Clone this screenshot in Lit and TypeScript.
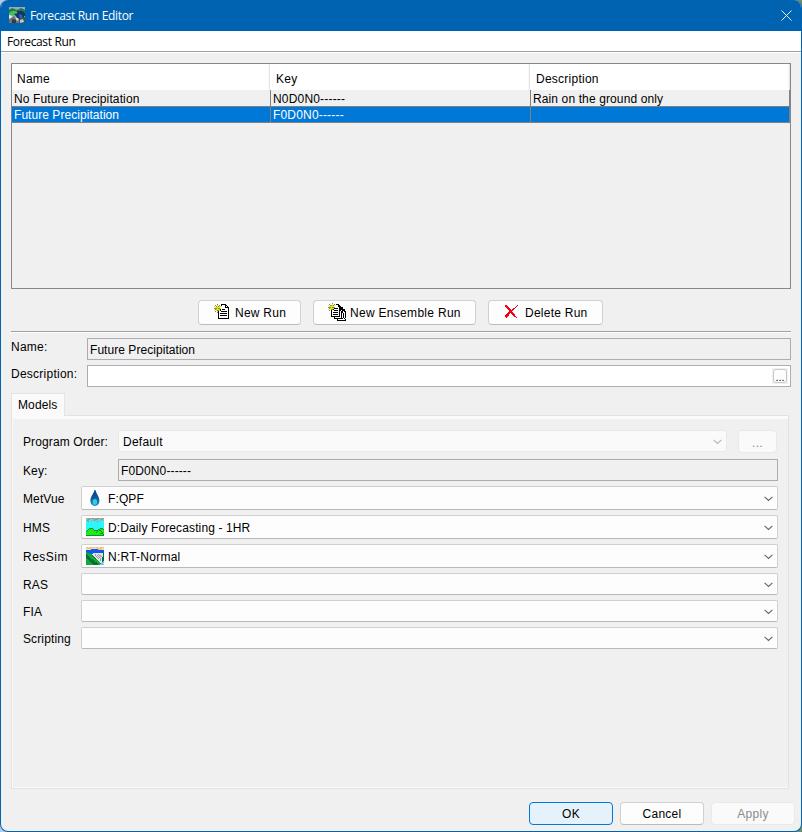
import { LitElement, html, svg, css, nothing } from "lit";
import { customElement, property } from "lit/decorators.js";

type Palette = Record<string, string>;

/* Draws a small bitmap-style icon: one character per pixel, runs merged into rects. */
function pixels(rows: string[], palette: Palette) {
  const w = Math.max(...rows.map((r) => r.length));
  const rects: unknown[] = [];
  rows.forEach((row, y) => {
    let x = 0;
    while (x < row.length) {
      const c = row[x];
      let n = 1;
      while (row[x + n] === c) n++;
      if (palette[c]) rects.push(svg`<rect x=${x} y=${y} width=${n} height="1" fill=${palette[c]}></rect>`);
      x += n;
    }
  });
  return html`<svg width=${w} height=${rows.length} viewBox="0 0 ${w} ${rows.length}" shape-rendering="crispEdges">${rects}</svg>`;
}

const DOC: Palette = { k: "#000", w: "#fff", y: "#e6e600", g: "#84847c" };

const newRun = [
  "   g   kkkkk   ",
  " g y g kwwwkk  ",
  "y gygyywwwwkwk ",
  " yyyyy wwwwkkkk",
  "gggyggywwwwwwwk",
  " gyyyykwkkkwwwk",
  "y yggykwwwwwwwk",
  " g ykwwkkkkkkwk",
  "   gkwwwwwwwwwk",
  "    kwkkkkkkkwk",
  "    kwwwwwwwwwk",
  "    kwkkkkkkkwk",
  "    kwwwwwwwwwk",
  "    kwwwwwwwwwk",
  "    kkkkkkkkkkk",
];

const newEnsemble = [
  "    g             ",
  " g  y g kkk       ",
  "y ggygywwwkk      ",
  " yyyyy wwwkkk     ",
  "gggygggwwwwkkkk   ",
  " gyyyykkkkwkkkk   ",
  "y yggkwwwwwkkkkkk ",
  " g kwwkkkkwkkwkkk ",
  "   kwwwwwwwkwkkwkk",
  "   kwkkkkkwkwkkwwk",
  "   kwwwwwwwkwkwkwk",
  "   kwkkkkkwkwkwkwk",
  "   kwwwwwwwkwkwkwk",
  "   kkkkkkkkkwkwkwk",
  "      kwwwwwwkwkwk",
  "      kkkkkkkkkwkw",
  "         kwwwwwwwk",
  "         kkkkkkkkk",
];

const remove = [
  "rr          r",
  "rrr        r ",
  " rrr      r  ",
  "  rrr   rr   ",
  "   rrr rr    ",
  "    rrrr     ",
  "    rrr      ",
  "   rrrrr     ",
  "  rrr rrr    ",
  " rrr   rrr   ",
  "rrrr    rr   ",
  "rrr      rr  ",
  " r         r ",
];

const hms = [
  "aaabaabbaaabbaaaba",
  "aabaaacaabbaaacbaa",
  "cbaccaacbacccaaaca",
  "ccbcccaccccbccaccc",
  "cccccccccccccccccc",
  "cccccccccccccccccc",
  "cccccccccccccccccc",
  "cccccccccccccccccc",
  "cccccccccccccccccc",
  "cccccccccccccccccc",
  "cccddddcccccccdddc",
  "ccdggggdccccddgggd",
  "cdggggggddddgddggg",
  "dggggggggggdgggdgg",
  "ggggggggggdgggggdg",
  "ggggggggggggggdddg",
  "gggggggggggggggggd",
  "dddddddddddddddddd",
];

const resSim = [
  "oopooooopoooppoooo",
  "pooooppppppooooopp",
  "wwwppbbbbbbboooowp",
  "bbbbbbbbbbbbbbbbbb",
  "bbbbbbbbbbbbbbbbbb",
  "gbbbbbbbbbbbbbbbbb",
  "ggggbbbwwwwwwwwwwd",
  "dgggggwwwswwswwwwd",
  "ddggggdwwswswsswwd",
  "dddggggdwwswswsswd",
  "ddddggggdwwswswwdd",
  "gddddggggdwwswswdd",
  "ggdddddggggwwwswdd",
  "gggdddddggggwwswdd",
  "ggggdddddggggwwwdc",
  "gggggddddddgggwwcc",
  "ggggggddddddgggccw",
  "gggggggdddddggcccc",
];

const icons = {
  newRun: () => pixels(newRun, DOC),
  newEnsemble: () => pixels(newEnsemble, DOC),
  remove: () => pixels(remove, { r: "#f00014" }),
  hms: () => pixels(hms, { a: "#a8b0b2", b: "#848c8e", c: "#2cf6fa", d: "#0a941c", g: "#1cec1c" }),
  resSim: () =>
    pixels(resSim, { o: "#f8c078", p: "#fbd8a4", b: "#0a5cf0", w: "#e4e2e8", s: "#a09ca4", g: "#14a83c", d: "#087030", c: "#58c8f4" }),
  drop: () => html`<svg width="10" height="16" viewBox="0 0 10 16">
    <defs>
      <linearGradient id="drop" x1="0" y1="0" x2="0" y2="1">
        <stop offset="0" stop-color="#123c84"></stop>
        <stop offset=".5" stop-color="#0c5a9c"></stop>
        <stop offset="1" stop-color="#1590c4"></stop>
      </linearGradient>
    </defs>
    <path d="M4.500 0C3.500 4 .4 6.500 .4 10.800 .4 14 2.200 16 4.900 16s4.500-2 4.500-5.200C9.400 6.500 6.300 4 5.500 0z" fill="url(#drop)"></path>
    <ellipse cx="4.900" cy="12" rx="2.300" ry="2.900" fill="#3cc8e4"></ellipse>
  </svg>`,
  app: () => html`<svg width="16" height="16" viewBox="0 0 16 16">
    <rect width="16" height="16" fill="#a4b4c0"></rect>
    <path d="M0 0h16v3H0z" fill="#98a8b8"></path>
    <path d="M0 3l3-2 5 2 4-2 4 2v4H0z" fill="#1e7a4c"></path>
    <path d="M0 6l3-2 4 0 2 2-5 3H0z" fill="#48c058"></path>
    <path d="M8 4l5 0 3 2v3l-7 0z" fill="#123a5e"></path>
    <path d="M5 7l5-1 5 3 1 3-6 1z" fill="#1c3464"></path>
    <path d="M10 7l3 1 1 4-3 1z" fill="#2860d0"></path>
    <path d="M0 9l4 0 5 2 1 5H0z" fill="#6c7478"></path>
    <path d="M0 8l4 1-2 2-2 1zM6 10l4 2-2 2z" fill="#e4e8ea"></path>
    <path d="M3 12l4 1 0 3H3z" fill="#303c38"></path>
    <path d="M10 12l6-2v6h-6z" fill="#3c5440"></path>
    <path d="M11 13l3-1 1 3-4 1z" fill="#c4ccca"></path>
  </svg>`,
  chevron: () => html`<svg width="9" height="6" viewBox="0 0 9 6">
    <path d="M.6 .8L4.500 4.500 8.400 .8" fill="none" stroke="currentColor" stroke-width="1.100"></path>
  </svg>`,
};

@customElement("run-combo")
class RunCombo extends LitElement {
  @property() value = "";
  @property() icon = "";
  @property({ type: Boolean, reflect: true }) disabled = false;

  static styles = css`
    :host {
      display: flex;
      align-items: flex-start;
      box-sizing: border-box;
      background: #fdfdfd;
      border: 1px solid #d0d0d0;
      border-bottom-color: #b9b9b9;
      border-radius: 2px;
      color: #000;
    }
    :host([disabled]) {
      background: #fafafa;
      border-color: #e9e9e9;
    }
    svg { display: block; }
    .icon { width: 18px; height: 18px; margin: 2px 4px 0; display: flex; justify-content: center; align-items: center; }
    .value { flex: 1; padding-top: 5px; line-height: 14px; white-space: pre; }
    :host([disabled]) .value { padding: 4px 0 0 4px; }
    .arrow { align-self: center; padding: 1px 4px 0 0; color: #666; }
    :host([disabled]) .arrow { color: #b4b4b4; }
  `;

  render() {
    const draw = icons[this.icon as keyof typeof icons];
    return html`${draw ? html`<span class="icon">${draw()}</span>` : nothing}
      <span class="value">${this.value}</span>
      <span class="arrow">${icons.chevron()}</span>`;
  }
}

const RUNS = [
  { name: "No Future Precipitation", key: "N0D0N0------", description: "Rain on the ground only" },
  { name: "Future Precipitation", key: "F0D0N0------", description: "", selected: true },
];

const MODELS = [
  { label: "MetVue", value: "F:QPF", icon: "drop" },
  { label: "HMS", value: "D:Daily Forecasting - 1HR", icon: "hms" },
  { label: "ResSim", value: "N:RT-Normal", icon: "resSim", wide: true },
  { label: "RAS", value: "", icon: "" },
  { label: "FIA", value: "", icon: "" },
  { label: "Scripting", value: "", icon: "" },
];

@customElement("app-root")
class AppRoot extends LitElement {
  static styles = css`
    :host {
      display: block;
      width: 802px;
      height: 832px;
      background: linear-gradient(90deg, #b4cce4, #6c8c6c);
      font: 12px/14px "Liberation Sans", Arial, sans-serif;
      letter-spacing: 0.12px;
      color: #000;
    }
    * { box-sizing: border-box; }
    svg { display: block; }
    .window {
      display: flex;
      flex-direction: column;
      height: 832px;
      background: #f0f0f0;
      border: solid #0063b1;
      border-width: 0 1px 1px;
      border-radius: 8px;
      overflow: hidden;
    }
    .titlebar {
      display: flex;
      height: 31px;
      background: #0063b1;
      color: #fff;
      font-family: "Open Sans", "Noto Sans", sans-serif;
      letter-spacing: -0.32px;
      padding: 7px 9px 0 8px;
    }
    .titlebar .caption { flex: 1; padding: 2px 0 0 5px; }
    .titlebar .close { padding: 3px 0 0; }
    .menubar {
      height: 22px;
      background: #fff;
      border-bottom: 1px solid #fff;
      box-shadow: inset 0 -1px #a0a0a0;
      font-family: "Open Sans", "Noto Sans", sans-serif;
      letter-spacing: -0.35px;
      padding: 4px 6px;
    }
    .table {
      margin: 10px 10px 0;
      height: 226px;
      border: 1px solid #828790;
    }
    .tr { display: grid; grid-template-columns: 259px 260px 259px; white-space: pre; }
    .th { height: 26px; background: #fff; letter-spacing: 0.25px; grid-template-columns: 258px 260px 260px; }
    .th span { padding: 8px 0 0 5px; border-right: 1px solid #e5e5e5; box-shadow: inset -1px 0 #f8f8f8; }
    .th span:not(:first-child) { padding-left: 6px; }
    .td { height: 17px; border-bottom: 1px solid #808080; }
    .td span { padding: 2px 0 0 2px; border-right: 1px solid #808080; }
    .selected { height: 16px; background: #0078d7; color: #fff; }
    .selected span { padding-top: 1px; }
    .selected span:first-child, .tight { letter-spacing: 0.05px; }
    .td span:nth-child(2) { letter-spacing: 0.18px; }
    .actions { display: flex; justify-content: center; gap: 12px; margin: 11px 1px 0 0; height: 25px; letter-spacing: 0.28px; }
    .button {
      display: flex;
      justify-content: center;
      background: #fdfdfd;
      border: 1px solid #d0d0d0;
      border-bottom-color: #bcbcbc;
      border-radius: 4px;
      padding-top: 5px;
      letter-spacing: 0.25px;
    }
    .actions .button { justify-content: flex-start; }
    .actions .button svg { flex: none; }
    .new { width: 103px; padding-left: 15px; }
    .new svg { margin: -2px 6px 0 0; }
    .ensemble { width: 163px; padding-left: 14px; }
    .ensemble svg { margin: -3px 4px 0 0; }
    .ensemble { letter-spacing: 0.3px; }
    .delete { width: 115px; padding-left: 16px; }
    .delete svg { margin: -1px 7px 0 0; }
    .rule { height: 2px; margin: 6px 10px 0; background: #fff; border-top: 1px solid #a0a0a0; }
    .field-row { display: flex; height: 22px; margin: 5px 10px 0; }
    .field-row + .field-row { margin-top: 5px; }
    .field-row label { width: 76px; padding-top: 2px; letter-spacing: 0.25px; }
    .field {
      flex: 1;
      display: flex;
      justify-content: space-between;
      height: 22px;
      border: 1px solid #abadb3;
      padding: 4px 2px 0;
      white-space: pre;
    }
    .editable { background: #fff; padding-top: 2px; }
    .well { width: 16px; height: 16px; background: #f0f0f0; padding: 1px; }
    .mini {
      width: 14px;
      height: 14px;
      background: #fdfdfd;
      border: 1px solid #c8c8c8;
      border-radius: 3px;
      text-align: center;
      line-height: 14px;
      letter-spacing: 0;
      font-size: 11px;
    }
    .tabs { margin: 6px 12px 0 10px; height: 396px; display: flex; flex-direction: column; }
    .tab {
      align-self: flex-start;
      width: 54px;
      height: 23px;
      margin-bottom: -1px;
      z-index: 1;
      background: #fafafa;
      border: 1px solid #e4e4e4;
      border-bottom: 0;
      padding: 4px 0 0 6px;
    }
    .pane {
      flex: 1;
      border: 1px solid #e2e2e2;
      box-shadow: inset 1px 3px #fafafa, inset 0 -1px #fafafa;
      padding: 14px 10px 0 11px;
    }
    .order { display: flex; height: 23px; }
    .order label, .key label { width: 95px; }
    .order label { padding-top: 5px; }
    .order run-combo { width: 609px; height: 22px; letter-spacing: 0.25px; }
    .order .button { width: 39px; height: 23px; margin-left: 11px; }
    .key { display: flex; margin-top: 6px; }
    .key label { padding-top: 5px; }
    .models { display: grid; grid-template-columns: 58px 1fr; row-gap: 5px; margin-top: 5px; grid-template-rows: repeat(3, 24px) repeat(3, 22px); }
    .models label { padding-top: 6px; }
    .models .plain { padding-top: 5px; }
    .models .wide { letter-spacing: 0.5px; }
    .models .wide + run-combo { letter-spacing: 0.25px; }
    .disabled { background: #fafafa; border-color: #e9e9e9; color: #8c8c8c; }
    .footer { display: flex; justify-content: flex-end; gap: 7px; margin: 13px 6px 0; }
    .footer .button { width: 84px; height: 23px; padding-top: 4px; }
    .footer .default { background: #e6f2fb; border-color: #0078d7; }
  `;

  render() {
    return html`<div class="window">
      <header class="titlebar">
        ${icons.app()}
        <span class="caption">Forecast Run Editor</span>
        <svg class="close" width="11" height="14" viewBox="0 0 11 11" fill="none" stroke="#e8f0f8" stroke-width="1">
          <path d="M.5 .5l10 10M10.500 .5l-10 10"></path>
        </svg>
      </header>
      <nav class="menubar">Forecast Run</nav>

      <section class="table">
        <div class="tr th"><span>Name</span><span>Key</span><span>Description</span></div>
        ${RUNS.map(
          (r) => html`<div class="tr td ${r.selected ? "selected" : ""}"><span>${r.name}</span><span>${r.key}</span><span>${r.description}</span></div>`
        )}
      </section>

      <div class="actions">
        <div class="button new">${icons.newRun()}<span>New Run</span></div>
        <div class="button ensemble">${icons.newEnsemble()}<span>New Ensemble Run</span></div>
        <div class="button delete">${icons.remove()}<span>Delete Run</span></div>
      </div>
      <div class="rule"></div>

      <div class="field-row"><label>Name:</label><div class="field tight">Future Precipitation</div></div>
      <div class="field-row">
        <label>Description:</label>
        <div class="field editable"><span></span><div class="well"><div class="mini">...</div></div></div>
      </div>

      <section class="tabs">
        <div class="tab">Models</div>
        <div class="pane">
          <div class="order">
            <label>Program Order:</label>
            <run-combo value="Default" disabled></run-combo>
            <div class="button disabled">...</div>
          </div>
          <div class="key"><label>Key:</label><div class="field">F0D0N0------</div></div>
          <div class="models">
            ${MODELS.map(
              (m) => html`<label class="${m.icon ? "" : "plain"} ${m.wide ? "wide" : ""}">${m.label}</label><run-combo .value=${m.value} .icon=${m.icon}></run-combo>`
            )}
          </div>
        </div>
      </section>

      <footer class="footer">
        <div class="button default">OK</div>
        <div class="button">Cancel</div>
        <div class="button disabled">Apply</div>
      </footer>
    </div>`;
  }
}
